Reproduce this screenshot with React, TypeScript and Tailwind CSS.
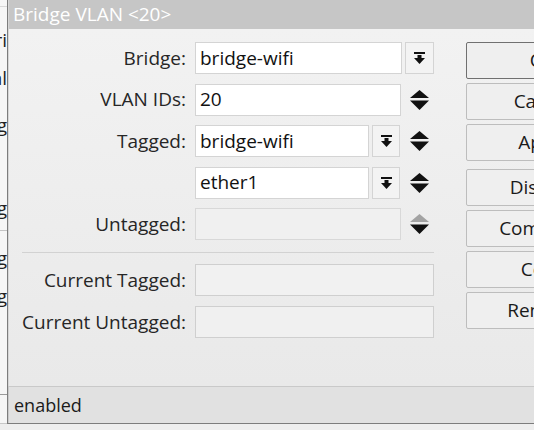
function DropIcon() {
  return (
    <svg width="11" height="12" viewBox="0 0 11 12">
      <rect x="0" y="0" width="11" height="2" fill="#111" />
      <rect x="3.5" y="3" width="4" height="3" fill="#111" />
      <polygon points="0,6 11,6 5.5,12" fill="#111" />
    </svg>
  )
}

function UpDown({ disabledUp = false }: { disabledUp?: boolean }) {
  return (
    <svg width="19" height="20" viewBox="0 0 19 20">
      <polygon points="0,8 9.5,0 19,8" fill={disabledUp ? "#a3a3a3" : "#111"} />
      <polygon points="0,10.5 19,10.5 9.5,20" fill="#111" />
    </svg>
  )
}

function DropButton({ w }: { w: string }) {
  return (
    <div className={`${w} ml-[3px] h-full flex items-center justify-center border border-[#d4d4d4] bg-[#f3f3f3]`}>
      <DropIcon />
    </div>
  )
}

function Label({ children }: { children: React.ReactNode }) {
  return <div className="w-[165px] shrink-0 text-right pr-[1px] text-[#262626]">{children}</div>
}

const buttons = ["OK", "Cancel", "Apply", "Discard", "Comment", "Copy", "Remove"]

export default function App() {
  return (
    <div
      className="w-[534px] h-[430px] overflow-hidden flex bg-[#eeeeee] text-[19px] leading-none"
      style={{ fontFamily: '"Open Sans", "Noto Sans", sans-serif' }}
    >
      {/* background window, mostly hidden */}
      <div className="w-[7px] shrink-0 h-[424px] overflow-hidden bg-[#f6f6f6] text-[#222] flex flex-col items-end border-b border-[#c8c8c8]">
        <div className="h-[7px] w-full border-b border-[#d8d8d8] shrink-0" />
        <div className="mt-[24px] whitespace-nowrap flex justify-end w-full">bri</div>
        <div className="mt-[19px] whitespace-nowrap flex justify-end w-full">al</div>
        <div className="mt-[28px] whitespace-nowrap flex justify-end w-full">ig</div>
        <div className="mt-[64px] whitespace-nowrap flex justify-end w-full">ig</div>
        <div className="mt-[12px] h-[1px] w-full bg-[#c4c4c4] shrink-0" />
        <div className="mt-[18px] whitespace-nowrap flex justify-end w-full">ig</div>
        <div className="mt-[19px] whitespace-nowrap flex justify-end w-full">ig</div>
        <div className="mt-[88px] h-[1px] w-full bg-[#9a9a9a] shrink-0" />
      </div>

      {/* dialog window */}
      <div className="flex-1 h-[424px] flex flex-col border-l border-b border-[#7d7d7d]">
        <div className="h-[29px] shrink-0 bg-[#c6c6c6] text-white flex items-center pl-[4px] border-l border-[#d6d6d6]">
          Bridge VLAN &lt;20&gt;
        </div>

        <div className="flex-1 flex bg-gradient-to-b from-[#f2f2f2] to-[#e9e9e9] border-l border-[#d6d6d6]">
          {/* form */}
          <div className="pl-[13px] pt-[13px] flex flex-col shrink-0">
            <div className="flex items-center h-[32px]">
              <Label>Bridge:</Label>
              <div className="ml-[8px] w-[239px] h-full flex">
                <div className="flex-1 h-full bg-white border border-[#d4d4d4] flex items-center pl-[4px] text-[#111]">bridge-wifi</div>
                <DropButton w="w-[29px]" />
              </div>
            </div>

            <div className="flex items-center h-[32px] mt-[9.5px]">
              <Label>VLAN IDs:</Label>
              <div className="ml-[8px] w-[239px] h-full flex">
                <div className="w-[206px] h-full bg-white border border-[#d4d4d4] flex items-center pl-[4px] text-[#111]">20</div>
                <div className="flex-1 flex items-center justify-end pr-[5px]">
                  <UpDown />
                </div>
              </div>
            </div>

            <div className="flex items-center h-[32px] mt-[9.5px]">
              <Label>Tagged:</Label>
              <div className="ml-[8px] w-[239px] h-full flex">
                <div className="w-[174px] h-full bg-white border border-[#d4d4d4] flex items-center pl-[4px] text-[#111]">bridge-wifi</div>
                <DropButton w="w-[28px]" />
                <div className="flex-1 flex items-center justify-end pr-[5px]">
                  <UpDown />
                </div>
              </div>
            </div>

            <div className="flex items-center h-[32px] mt-[9.5px]">
              <div className="w-[165px] shrink-0" />
              <div className="ml-[8px] w-[239px] h-full flex">
                <div className="w-[174px] h-full bg-white border border-[#d4d4d4] flex items-center pl-[4px] text-[#111]">ether1</div>
                <DropButton w="w-[28px]" />
                <div className="flex-1 flex items-center justify-end pr-[5px]">
                  <UpDown />
                </div>
              </div>
            </div>

            <div className="flex items-center h-[32px] mt-[9.5px]">
              <Label>Untagged:</Label>
              <div className="ml-[8px] w-[239px] h-full flex">
                <div className="w-[206px] h-full bg-[#f0f0f0] border border-[#d8d8d8]" />
                <div className="flex-1 flex items-center justify-end pr-[5px]">
                  <UpDown disabledUp />
                </div>
              </div>
            </div>

            <div className="mt-[12px] h-[1px] w-[412px] bg-[#d2d2d2]" />

            <div className="flex items-center h-[32px] mt-[11px]">
              <Label>Current Tagged:</Label>
              <div className="ml-[8px] w-[239px] h-full bg-[#f1f1f1] border border-[#cfcfcf]" />
            </div>

            <div className="flex items-center h-[32px] mt-[10px]">
              <Label>Current Untagged:</Label>
              <div className="ml-[8px] w-[239px] h-full bg-[#f0f0f0] border border-[#cfcfcf]" />
            </div>
          </div>

          {/* buttons */}
          <div className="ml-[32px] pt-[13px] flex flex-col gap-[4px] shrink-0">
            {buttons.map((b, i) => (
              <div
                key={b}
                className={`w-[154px] h-[37px] shrink-0 flex items-center justify-center rounded-[2px] bg-[#efefef] text-[#1a1a1a] border ${
                  i === 0 ? "border-[#707070]" : "border-[#bdbdbd]"
                } ${i === 3 ? "mt-[4px]" : ""}`}
              >
                {b}
              </div>
            ))}
          </div>
        </div>

        {/* status bar */}
        <div className="h-[37px] shrink-0 bg-[#e1e1e1] border-t border-l border-[#c9c9c9] flex items-center pl-[5px] text-[18px] text-[#1a1a1a]">
          enabled
        </div>
      </div>
    </div>
  )
}
